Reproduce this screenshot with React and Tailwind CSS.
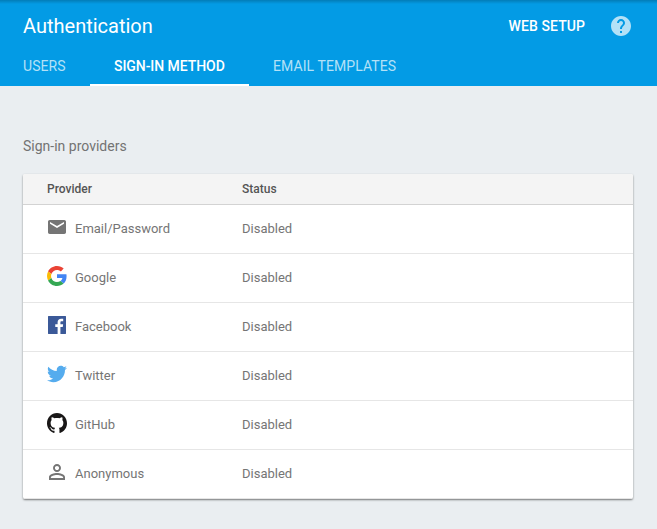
import React from "react";

function MailIcon() {
  return (
    <svg className="w-[18px] h-[14px]" viewBox="0 0 18 14" fill="#757575">
      <path d="M16.3 0H1.7C.75 0 0 .75 0 1.7v10.6C0 13.25.75 14 1.7 14h14.6c.95 0 1.7-.75 1.7-1.7V1.7C18 .75 17.25 0 16.3 0zm-.3 3.7L9 7.9 2 3.7V1.9l7 4.2 7-4.2v1.8z" />
    </svg>
  );
}

function GoogleIcon() {
  return (
    <svg className="size-5" viewBox="0 0 48 48">
      <path fill="#EA4335" d="M24 9.5c3.54 0 6.71 1.22 9.21 3.6l6.85-6.85C35.9 2.38 30.47 0 24 0 14.62 0 6.51 5.38 2.56 13.22l7.98 6.19C12.43 13.72 17.74 9.5 24 9.5z" />
      <path fill="#4285F4" d="M46.98 24.55c0-1.57-.15-3.09-.38-4.55H24v9.02h12.94c-.58 2.96-2.26 5.48-4.78 7.18l7.73 6c4.51-4.18 7.09-10.36 7.09-17.65z" />
      <path fill="#FBBC05" d="M10.53 28.59c-.48-1.45-.76-2.99-.76-4.59s.27-3.14.76-4.59l-7.98-6.19C.92 16.46 0 20.12 0 24c0 3.88.92 7.54 2.56 10.78l7.97-6.19z" />
      <path fill="#34A853" d="M24 48c6.48 0 11.93-2.13 15.89-5.81l-7.73-6c-2.15 1.45-4.92 2.3-8.16 2.3-6.26 0-11.57-4.22-13.47-9.91l-7.98 6.19C6.51 42.62 14.62 48 24 48z" />
    </svg>
  );
}

function FacebookIcon() {
  return (
    <svg className="size-[18px]" viewBox="0 0 24 24" fill="#3b5998">
      <path d="M23.4 0H.6C.3 0 0 .3 0 .6v22.8c0 .3.3.6.6.6h12.218v-9.294H9.689v-3.621h3.129V8.41c0-3.099 1.894-4.785 4.659-4.785 1.325 0 2.464.097 2.796.141v3.24h-1.921c-1.5 0-1.792.721-1.792 1.771v2.311h3.584l-.465 3.63H16.56V24h6.84c.3 0 .6-.3.6-.6V.6c0-.3-.3-.6-.6-.6" />
    </svg>
  );
}

function TwitterIcon() {
  return (
    <svg className="size-5" viewBox="0 0 24 24" fill="#55acee">
      <path d="M23.954 4.569c-.885.389-1.83.654-2.825.775 1.014-.611 1.794-1.574 2.163-2.723-.951.555-2.005.959-3.127 1.184-.896-.959-2.173-1.559-3.591-1.559-2.717 0-4.92 2.203-4.92 4.917 0 .39.045.765.127 1.124C7.691 8.094 4.066 6.13 1.64 3.161c-.427.722-.666 1.561-.666 2.475 0 1.71.87 3.213 2.188 4.096-.807-.026-1.566-.248-2.228-.616v.061c0 2.385 1.693 4.374 3.946 4.827-.413.111-.849.171-1.296.171-.314 0-.615-.03-.916-.086.631 1.953 2.445 3.377 4.604 3.417-1.68 1.319-3.809 2.105-6.102 2.105-.39 0-.779-.023-1.17-.067 2.189 1.394 4.768 2.209 7.557 2.209 9.054 0 13.999-7.496 13.999-13.986 0-.209 0-.42-.015-.63.961-.689 1.8-1.56 2.46-2.548l-.047-.02z" />
    </svg>
  );
}

function GitHubIcon() {
  return (
    <svg className="size-5" viewBox="0 0 24 24" preserveAspectRatio="none" fill="#191717">
      <path transform="matrix(1 0 0 1.025 0 -0.3)" d="M12 .297c-6.63 0-12 5.373-12 12 0 5.303 3.438 9.8 8.205 11.385.6.113.82-.258.82-.577 0-.285-.01-1.04-.015-2.04-3.338.724-4.042-1.61-4.042-1.61C4.422 18.07 3.633 17.7 3.633 17.7c-1.087-.744.084-.729.084-.729 1.205.084 1.838 1.236 1.838 1.236 1.07 1.835 2.809 1.305 3.495.998.108-.776.417-1.305.76-1.605-2.665-.3-5.466-1.332-5.466-5.93 0-1.31.465-2.38 1.235-3.22-.135-.303-.54-1.523.105-3.176 0 0 1.005-.322 3.3 1.23.96-.267 1.98-.399 3-.405 1.02.006 2.04.138 3 .405 2.28-1.552 3.285-1.23 3.285-1.23.645 1.653.24 2.873.12 3.176.765.84 1.23 1.91 1.23 3.22 0 4.61-2.805 5.625-5.475 5.92.42.36.81 1.096.81 2.22 0 1.606-.015 2.896-.015 3.286 0 .315.21.69.825.57C20.565 22.092 24 17.592 24 12.297c0-6.627-5.373-12-12-12" />
    </svg>
  );
}

function PersonIcon() {
  return (
    <svg className="size-6" viewBox="0 0 24 24" fill="#757575">
      <path d="M12 5.9c1.16 0 2.1.94 2.1 2.1s-.94 2.1-2.1 2.1S9.9 9.16 9.9 8s.94-2.1 2.1-2.1m0 9c2.97 0 6.1 1.46 6.1 2.1v1.1H5.9V17c0-.64 3.13-2.1 6.1-2.1M12 4C9.79 4 8 5.79 8 8s1.79 4 4 4 4-1.79 4-4-1.79-4-4-4zm0 9c-2.67 0-8 1.34-8 4v3h16v-3c0-2.66-5.33-4-8-4z" />
    </svg>
  );
}

const providers = [
  { name: "Email/Password", Icon: MailIcon },
  { name: "Google", Icon: GoogleIcon },
  { name: "Facebook", Icon: FacebookIcon },
  { name: "Twitter", Icon: TwitterIcon },
  { name: "GitHub", Icon: GitHubIcon },
  { name: "Anonymous", Icon: PersonIcon },
];

export default function App() {
  return (
    <div className="h-[529px] w-[657px] overflow-hidden bg-[#eaeef1] font-['Roboto',sans-serif]">
      <header className="flex h-[86px] flex-col bg-[#039be5] bg-[linear-gradient(to_bottom,rgba(0,0,0,0.2),rgba(0,0,0,0)_4px)]">
        <div className="flex h-[52px] items-center pl-[23px] pr-6">
          <h1 className="text-xl leading-6 text-white">Authentication</h1>
          <button className="ml-auto text-sm font-medium leading-5 tracking-[0.08px] text-white">WEB SETUP</button>
          <svg className="ml-6 size-6" viewBox="0 0 24 24" fill="#b3e1f7">
            <path d="M12 2C6.48 2 2 6.48 2 12s4.48 10 10 10 10-4.48 10-10S17.52 2 12 2zm1 17h-2v-2h2v2zm2.07-7.75l-.9.92C13.45 12.9 13 13.5 13 15h-2v-.5c0-1.1.45-2.1 1.17-2.83l1.24-1.26c.37-.36.59-.86.59-1.41 0-1.1-.9-2-2-2s-2 .9-2 2H8c0-2.21 1.79-4 4-4s4 1.79 4 4c0 .88-.36 1.68-.93 2.25z" />
          </svg>
        </div>
        <nav className="flex h-[34px] text-sm leading-7 text-[#b3e1f7]">
          <a className="w-[90px] pl-[23px] tracking-[0.08px]">USERS</a>
          <a className="w-[159px] border-b-2 border-white pl-6 font-medium tracking-[-0.06px] text-white">SIGN-IN METHOD</a>
          <a className="pl-6 tracking-[0.09px]">EMAIL TEMPLATES</a>
        </nav>
      </header>
      <main className="px-[23px] pt-[50px]">
        <h2 className="text-sm leading-5 text-[#737373]">Sign-in providers</h2>
        <section className="mt-[18px] w-[610px] overflow-hidden rounded-[2px] bg-white shadow-[0_1px_2px_rgba(0,0,0,0.5)]">
          <div className="flex h-[31px] items-center border-b border-[#d3d3d3] bg-[#f4f4f4] pl-6 text-xs font-medium text-[#545454]">
            <span className="w-[195px]">Provider</span>
            <span>Status</span>
          </div>
          {providers.map(({ name, Icon }) => (
            <div key={name} className="flex h-[49px] items-center border-b border-[#e6e6e6] pl-[22px] text-[13px] text-[#757575]">
              <span className="mb-1 flex size-6 items-center justify-center"><Icon /></span>
              <span className="ml-1.5 w-[167px]">{name}</span>
              <span>Disabled</span>
            </div>
          ))}
        </section>
      </main>
    </div>
  );
}
